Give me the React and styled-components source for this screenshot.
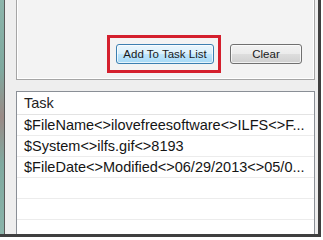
import React from 'react';
import styled, { createGlobalStyle } from 'styled-components';

const GlobalStyle = createGlobalStyle`
  html, body {
    margin: 0;
    padding: 0;
    background: #ffffff;
  }
  body {
    font-family: "Liberation Sans", Arial, sans-serif;
  }
`;

const Page = styled.div`
  width: 323px;
  height: 240px;
  overflow: hidden;
  background: #ffffff;
`;

const Frame = styled.div`
  display: flex;
  width: 321px;
  height: 237px;
  box-sizing: border-box;
  border-right: 3px solid #3f3f3f;
  border-bottom: 3px solid #3f3f3f;
`;

const Strip = styled.div`
  width: 4px;
  flex-shrink: 0;
  border-right: 1px solid #5a5a5a;
  background: linear-gradient(
    180deg,
    #8db5ab 0%,
    #7fa99f 30%,
    #9a8a86 50%,
    #80aaa0 70%,
    #8ab3a9 100%
  );
`;

const Panel = styled.div`
  flex: 1;
  display: flex;
  flex-direction: column;
  gap: 11px;
  padding: 0 3px 0 11px;
  background: #eeeeee;
  min-width: 0;
`;

const GroupBox = styled.div`
  display: flex;
  justify-content: flex-end;
  align-items: flex-start;
  gap: 9px;
  height: 80px;
  box-sizing: border-box;
  padding: 35px 12px 0 0;
  background: #f3f3f3;
  border: 1px solid #a5a5a5;
  border-top: none;
  box-shadow: inset 1px 0 0 #ffffff, inset -1px -1px 0 #ffffff;
`;

const Highlight = styled.div`
  display: flex;
  border: 3px solid #d41f2d;
  padding: 6px 4px 6px 6px;
`;

const Button = styled.button`
  width: ${p => p.$w}px;
  height: 20px;
  box-sizing: border-box;
  margin: 0;
  padding: 0 0 1px;
  font-family: "Liberation Sans", Arial, sans-serif;
  font-size: 11.5px;
  color: #1a1a1a;
  border-radius: 3px;
  border: 1px solid ${p => (p.$focused ? '#3c7fb1' : '#707070')};
  background: ${p =>
    p.$focused
      ? 'linear-gradient(180deg, #eaf6fd 0%, #d9f0fc 48%, #bee6fd 52%, #a7d9f5 100%)'
      : 'linear-gradient(180deg, #f2f2f2 0%, #ebebeb 48%, #dddddd 52%, #cfcfcf 100%)'};
  box-shadow: inset 0 0 0 1px rgba(255, 255, 255, 0.7);
`;

const ClearButton = styled(Button)`
  margin-top: 9px;
`;

const List = styled.div`
  flex: 1;
  background: #ffffff;
  border: 1px solid #8a8f96;
  border-bottom: none;
  overflow: hidden;
`;

const HeaderRow = styled.div`
  height: 23px;
  display: flex;
  align-items: center;
  padding-left: 7px;
  border-bottom: 1px solid #e3e3e3;
  font-size: 14.5px;
  color: #1e1e1e;
  box-sizing: border-box;
`;

const Row = styled.div`
  height: 21px;
  display: flex;
  align-items: center;
  padding-left: 7px;
  border-bottom: 1px solid #ececec;
  box-sizing: border-box;
  font-size: 14.5px;
  color: #151515;
  white-space: nowrap;
  overflow: hidden;
`;

const tasks = [
  '$FileName<>ilovefreesoftware<>ILFS<>F...',
  '$System<>ilfs.gif<>8193',
  '$FileDate<>Modified<>06/29/2013<>05/0...',
  '',
  '',
  '',
];

export default function App() {
  return (
    <Page>
      <GlobalStyle />
      <Frame>
        <Strip />
        <Panel>
          <GroupBox>
            <Highlight>
              <Button $w={98} $focused>Add To Task List</Button>
            </Highlight>
            <ClearButton $w={72}>Clear</ClearButton>
          </GroupBox>
          <List>
            <HeaderRow>Task</HeaderRow>
            {tasks.map((t, i) => (
              <Row key={i}>{t}</Row>
            ))}
          </List>
        </Panel>
      </Frame>
    </Page>
  );
}
